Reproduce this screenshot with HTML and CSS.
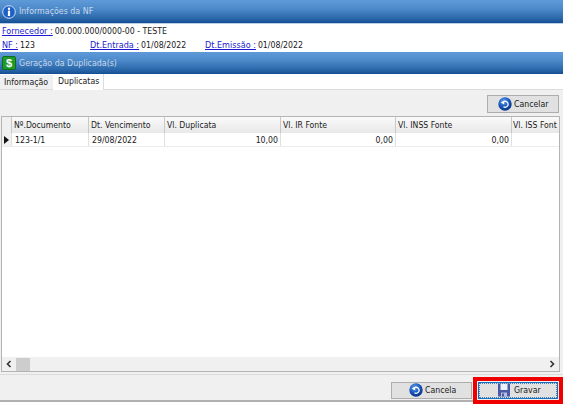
FILE: index.html
```html
<!DOCTYPE html>
<html lang="pt">
<head>
<meta charset="utf-8">
<title>Geração da Duplicada</title>
<link rel="stylesheet" href="styles.css">
</head>
<body>
<svg class="defs" width="0" height="0"><defs><radialGradient id="ball" cx="40%" cy="30%" r="75%"><stop offset="0" stop-color="#5b9bf0"/><stop offset=".6" stop-color="#1450b8"/><stop offset="1" stop-color="#0a2f80"/></radialGradient><symbol id="undo" viewBox="0 0 14 14"><circle cx="7" cy="7" r="6.7" fill="url(#ball)"/><path d="M4.4 6a3 3 0 1 1 1.1 3.8" fill="none" stroke="#fff" stroke-width="1.3"/><path d="M2.6 5.6 6.2 3.8V7.4z" fill="#fff"/></symbol></defs></svg>
<div class="window">
  <header class="band band-first">
    <svg class="band-icon" viewBox="0 0 14 14" width="14" height="14"><circle cx="7" cy="7" r="6.3" fill="#1d5fc4" stroke="#cfe0f5"/><circle cx="7" cy="3.7" r="1.2" fill="#fff"/><rect x="5.9" y="5.6" width="2.2" height="5.4" fill="#fff"/></svg>
    <span>Informações da NF</span>
  </header>
  <section class="info">
    <div class="info-row"><a>Fornecedor :</a><span>00.000.000/0000-00 - TESTE</span></div>
    <div class="info-row">
      <div class="cell cell-nf"><a>NF :</a><span>123</span></div>
      <div class="cell cell-ent"><a>Dt.Entrada :</a><span>01/08/2022</span></div>
      <div class="cell"><a>Dt.Emissão :</a><span>01/08/2022</span></div>
    </div>
  </section>
  <header class="band band-second">
    <svg class="band-icon" viewBox="0 0 14 14" width="14" height="14"><rect x=".5" y=".5" width="13" height="13" rx="1.5" fill="#1f9a2c" stroke="#0f6e1c"/><text x="7" y="11" text-anchor="middle" class="dollar">$</text></svg>
    <span>Geração da Duplicada(s)</span>
  </header>
  <nav class="tabs">
    <div class="tab">Informação</div>
    <div class="tab tab-active">Duplicatas</div>
  </nav>
  <main class="panel">
    <div class="toolbar">
      <button class="btn btn-cancelar"><svg class="undo" width="14" height="14"><use href="#undo"/></svg>Cancelar</button>
    </div>
    <div class="grid">
      <div class="grid-body">
        <div class="row row-head">
          <div class="c c0"></div>
          <div class="c c1">Nº.Documento</div>
          <div class="c c2">Dt. Vencimento</div>
          <div class="c c3">Vl. Duplicata</div>
          <div class="c c4">Vl. IR Fonte</div>
          <div class="c c5">Vl. INSS Fonte</div>
          <div class="c c6">Vl. ISS Font</div>
        </div>
        <div class="row row-data">
          <div class="c c0"><i class="pointer"></i></div>
          <div class="c c1">123-1/1</div>
          <div class="c c2">29/08/2022</div>
          <div class="c c3 num">10,00</div>
          <div class="c c4 num">0,00</div>
          <div class="c c5 num">0,00</div>
          <div class="c c6"></div>
        </div>
      </div>
      <div class="scrollbar">
        <svg class="chev" viewBox="0 0 8 8" width="8" height="8"><path d="M5.5 1 2.5 4l3 3" fill="none" stroke="#333" stroke-width="1.6"/></svg>
        <div class="thumb"></div>
        <div class="track"></div>
        <svg class="chev" viewBox="0 0 8 8" width="8" height="8"><path d="M2.5 1l3 3-3 3" fill="none" stroke="#333" stroke-width="1.6"/></svg>
      </div>
    </div>
  </main>
  <footer class="footer">
    <button class="btn btn-cancela"><svg class="undo" width="14" height="14"><use href="#undo"/></svg>Cancela</button>
    <button class="btn btn-gravar"><svg class="floppy" viewBox="0 0 14 14" width="14" height="14"><path d="M1 .5h12v13H1z" fill="#4a5aa8"/><rect x="3.5" y=".5" width="7" height="6.5" fill="#eef0f7"/><rect x="4" y="9.5" width="6" height="4" fill="#b8c0dc"/><rect x="5" y="10.5" width="2" height="3" fill="#4a5aa8"/></svg>Gravar</button>
  </footer>
</div>
</body>
</html>
```
FILE: styles.css
```css
* { box-sizing: border-box; }
html, body { margin: 0; padding: 0; background: #fff; }
body { width: 563px; height: 406px; overflow: hidden; font: 8.7px/13px "DejaVu Sans Condensed", "DejaVu Sans", sans-serif; font-stretch: condensed; color: #1a1a1a; }
.defs { position: absolute; }
.window { display: flex; flex-direction: column; height: 406px; }

.band { display: flex; align-items: center; gap: 3px; padding-left: 2px; color: #c9d8ea; font-size: 8.8px; background: linear-gradient(#5f9ad8 0, #4f8ccc 35%, #2f6cae 75%, #1a5499 96%, #104a8c 100%); flex: none; }
.band-first { height: 24px; border-bottom: 1px solid #b9d0ea; }
.band-second { height: 22px; }
.band-icon { flex: none; }
.dollar { font: bold 11px "Liberation Sans", sans-serif; fill: #fff; }

.info { height: 28px; padding: 1px 2px 0; background: #fff; display: flex; flex-direction: column; gap: 0; flex: none; }
.info-row { display: flex; height: 13.5px; align-items: center; }
.info-row a { color: #1a1ad0; text-decoration: underline; margin-right: 2px; font-size: 9px; }
.cell { display: flex; }
.cell-nf { width: 88px; }
.cell-ent { width: 115px; }

.tabs { height: 16px; display: flex; align-items: flex-end; background: #fff; flex: none; border-bottom: 1px solid #dcdcdc; }
.tab { width: 53px; height: 14px; padding-left: 4px; background: #f0f0f0; line-height: 14px; }
.tab-active { width: 51px; height: 16px; padding-left: 5px; margin-bottom: -1px; background: #fff; border-right: 1px solid #dcdcdc; line-height: 15px; position: relative; }

.panel { flex: none; height: 284px; background: #f0f0f0; padding: 5px 2px 0 1px; display: flex; flex-direction: column; }
.toolbar { display: flex; justify-content: flex-end; height: 21px; padding-right: 2px; flex: none; }
.btn { display: flex; align-items: center; gap: 2px; height: 18px; padding: 0; border: 1px solid #adadad; background: #e1e1e1; font: inherit; color: inherit; }
.btn-cancelar { width: 72px; padding-left: 10px; }

.grid { height: 256px; width: 559px; border: 1px solid #b4b4b4; background: #fff; display: flex; flex-direction: column; flex: none; }
.grid-body { flex: 1; overflow: hidden; }
.row { display: flex; }
.row-head { height: 16px; background: linear-gradient(#fafafa, #e8e8e8); }
.row-data { height: 14px; border-bottom: 1px solid #ececec; }
.c { flex: none; padding: 0 2px; white-space: nowrap; overflow: hidden; border-right: 1px solid #e0e0e0; line-height: 14px; }
.row-head .c { border-right-color: #c8c8c8; font-size: 8.6px; line-height: 16px; }
.c0 { width: 10px; background: #f0f0f0; padding: 0; display: flex; align-items: center; justify-content: center; }
.c1 { width: 77px; }
.c2 { width: 76px; }
.c3 { width: 116px; }
.c4 { width: 115px; }
.c5 { width: 116px; }
.c6 { width: 47px; border-right: 0; padding-right: 0; padding-left: 1px; }
.row-data .c1, .row-data .c2 { padding-left: 3px; }
.num { text-align: right; }
.pointer { width: 0; height: 0; border-left: 5px solid #111; border-top: 4.5px solid transparent; border-bottom: 4.5px solid transparent; }

.scrollbar { height: 14px; background: #f0f0f0; display: flex; align-items: center; flex: none; }
.chev { flex: none; margin: 0 3px; }
.thumb { width: 14px; height: 13px; background: #cdcdcd; flex: none; }
.track { flex: 1; }

.footer { flex: none; height: 28px; background: #f0f0f0; border-top: 1px solid #dcdcdc; border-bottom: 2px solid #b0b0b0; display: flex; justify-content: flex-end; align-items: center; gap: 6px; padding: 5px 5px 0 0; }
.footer .btn { height: 17px; }
.btn-cancela { width: 81px; padding-left: 17px; }
.btn-gravar { width: 80px; padding-left: 18px; gap: 3px; position: relative; border: 1px solid #1a6fc0; outline: 4px solid #ee0000; outline-offset: 1px; }
.btn-gravar::after { content: ""; position: absolute; inset: 0; border: 1px dotted #4a7fb4; }
```
